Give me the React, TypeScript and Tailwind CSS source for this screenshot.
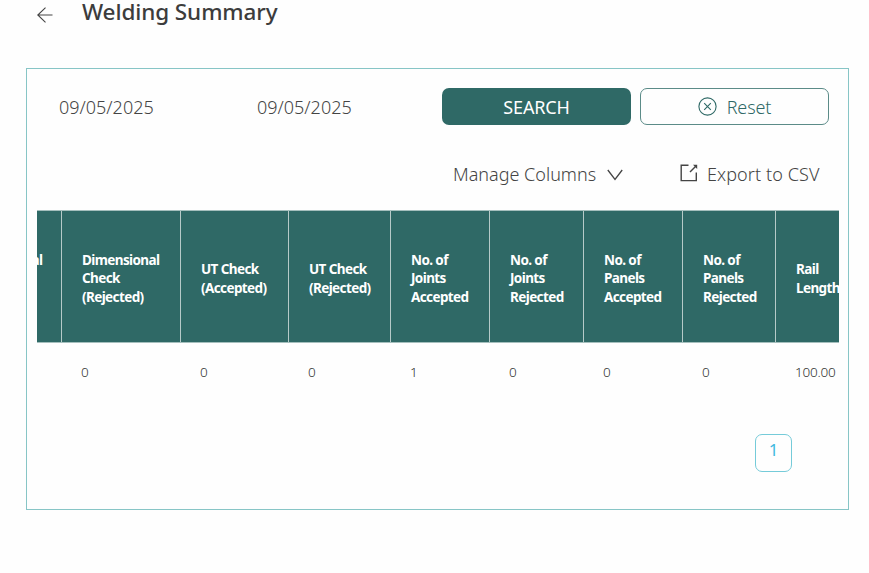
const columns = [
  { lines: ["Dimensional", "Check", "(Rejected)"], value: "0", width: "w-[119px]" },
  { lines: ["UT Check", "(Accepted)"], value: "0", width: "w-[108px]" },
  { lines: ["UT Check", "(Rejected)"], value: "0", width: "w-[102px]" },
  { lines: ["No. of", "Joints", "Accepted"], value: "1", width: "w-[99px]" },
  { lines: ["No. of", "Joints", "Rejected"], value: "0", width: "w-[94px]" },
  { lines: ["No. of", "Panels", "Accepted"], value: "0", width: "w-[99px]" },
  { lines: ["No. of", "Panels", "Rejected"], value: "0", width: "w-[93px]" },
  { lines: ["Rail", "Length"], value: "100.00", width: "w-[110px]" },
];

function BackIcon() {
  return (
    <svg className="mt-[7px] ml-px h-4 w-4" viewBox="0 0 16 16" fill="none" stroke="#444" strokeWidth="1.1">
      <path d="M8.5 .7 .8 8l7.7 7.3M.8 8H15.5" />
    </svg>
  );
}

function ResetIcon() {
  return (
    <svg className="-mt-px h-[19px] w-[19px]" viewBox="0 0 19 19" fill="none" stroke="#2f6966" strokeWidth="1.1">
      <circle cx="9.5" cy="9.5" r="8.6" />
      <path d="m6.2 6.2 6.6 6.6M12.8 6.2l-6.6 6.6" />
    </svg>
  );
}

function ExportIcon() {
  return (
    <svg className="-mt-[3px] h-[18px] w-[18px]" viewBox="0 0 18 18" fill="none" stroke="#444" strokeWidth="1.4">
      <path d="M8.5 1.3H1.2v15.3h15.1V8.5" />
      <path d="M10 8 16 2" />
      <path d="M13 .8h4.2V5z" fill="#444" stroke="none" />
    </svg>
  );
}

export default function App() {
  return (
    <main className="h-[573px] w-[869px] overflow-hidden bg-[#fefefe] font-['Noto_Sans','Open_Sans',sans-serif] text-[#444]">
      <header className="flex h-[68px] items-start pl-[36px]">
        <BackIcon />
        <h1 className="ml-[29px] text-[22.5px] leading-[23px] font-medium tracking-[-0.1px] whitespace-nowrap text-[#3c3c3c]">
          Welding Summary
        </h1>
      </header>

      <section className="ml-[26px] flex h-[442px] w-[823px] flex-col border border-[#87c5c6] px-[10px] pt-[19px]">
        <div className="flex h-[37px] shrink-0 pl-[22px]">
          <div className="w-[198px] text-[18px] leading-[38px] font-light">09/05/2025</div>
          <div className="w-[185px] text-[18px] leading-[38px] font-light">09/05/2025</div>
          <button className="h-[37px] w-[189px] rounded-[7px] bg-[#2f6966] pt-px text-[18px] tracking-[-0.15px] text-white">SEARCH</button>
          <button className="ml-[9px] flex h-[37px] w-[189px] items-center justify-center gap-[10px] rounded-[7px] border border-[#5b8b88] pt-px text-[18px] font-light tracking-[-0.1px] text-[#2f6966]">
            <ResetIcon />
            Reset
          </button>
        </div>

        <div className="mt-[31px] flex h-[36px] shrink-0 items-center pl-[416px] text-[18px] font-light whitespace-nowrap">
          <button className="flex w-[227px] items-center">
            <span className="w-[154px] text-left">Manage Columns</span>
            <svg className="mt-[2px] h-3 w-4" viewBox="0 0 16 12" fill="none" stroke="#444" strokeWidth="1.3">
              <path d="m.8 1 7.2 9.5L15.2 1" />
            </svg>
          </button>
          <button className="flex items-center gap-[9px] tracking-[0.1px]">
            <ExportIcon />
            Export to CSV
          </button>
        </div>

        <div className="mt-[18px] w-[802px] shrink-0 overflow-hidden">
          <div className="flex h-[132.5px] w-[860px] border-y border-[#a5bfbd] bg-[#2f6966] text-[13.5px] leading-[18.7px] font-bold whitespace-nowrap text-white">
            <div className="flex w-6 shrink-0 items-center justify-end overflow-hidden pr-[18.5px]">
              <span className="-mt-[32px] tracking-[-0.6px]">al</span>
            </div>
            {columns.map((column, index) => (
              <div key={index} className={`${column.width} flex shrink-0 flex-col items-start justify-center border-l border-[#b6cac8] pl-5 pt-[5px] tracking-[-0.6px]`}>
                {column.lines.map((line) => <span key={line}>{line}</span>)}
              </div>
            ))}
          </div>
          <div className="flex h-[60px] w-[860px] pl-6 text-[13.5px] leading-[58px] font-light tracking-[-0.25px] text-[#333]">
            {columns.map((column, index) => (
              <div key={index} className={`${column.width} shrink-0 pl-5`}>{column.value}</div>
            ))}
          </div>
        </div>

        <nav className="mt-[31px] flex justify-end pr-[46px]">
          <button className="h-[38px] w-[37px] rounded-[7px] border border-[#75cbd9] pb-[6px] text-[17px] leading-[30px] text-[#40b9df]">1</button>
        </nav>
      </section>
    </main>
  );
}
